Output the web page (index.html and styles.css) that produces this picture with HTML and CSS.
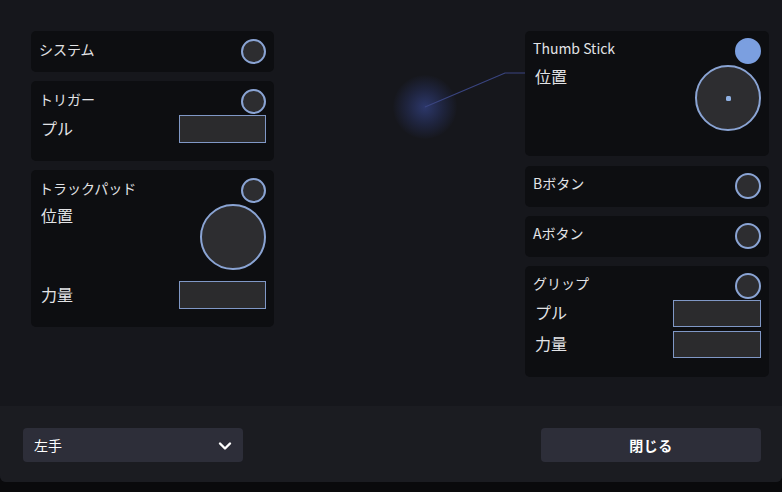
FILE: index.html
```html
<!DOCTYPE html>
<html lang="ja">
<head>
<meta charset="utf-8">
<title>コントローラー</title>
<link rel="stylesheet" href="styles.css">
</head>
<body>
<div class="dialog">
  <main class="canvas">
    <div class="glow"></div>
    <svg class="wire" width="782" height="406" viewBox="0 0 782 406">
      <polyline points="425,107 505,73 525,73" fill="none" stroke="#3a4580" stroke-width="1.2"/>
    </svg>
    <section class="column">
      <div class="card card-single">
        <div class="card-head"><span class="title">システム</span><span class="dot"></span></div>
      </div>
      <div class="card">
        <div class="card-head"><span class="title">トリガー</span><span class="dot"></span></div>
        <div class="row row-tight"><span class="label">プル</span><span class="bar"></span></div>
      </div>
      <div class="card">
        <div class="card-head"><span class="title">トラックパッド</span><span class="dot"></span></div>
        <div class="row row-top row-tight"><span class="label">位置</span><span class="pad"></span></div>
        <div class="row row-gap"><span class="label">力量</span><span class="bar"></span></div>
      </div>
    </section>
    <section class="column column-right">
      <div class="card card-thumb">
        <div class="card-head"><span class="title">Thumb Stick</span><span class="dot dot-on"></span></div>
        <div class="row row-top row-tight"><span class="label">位置</span><span class="pad"><span class="pad-center"></span></span></div>
      </div>
      <div class="card card-single">
        <div class="card-head"><span class="title">Bボタン</span><span class="dot"></span></div>
      </div>
      <div class="card card-single">
        <div class="card-head"><span class="title">Aボタン</span><span class="dot"></span></div>
      </div>
      <div class="card card-grip">
        <div class="card-head"><span class="title">グリップ</span><span class="dot"></span></div>
        <div class="row row-tight"><span class="label">プル</span><span class="bar"></span></div>
        <div class="row row-small"><span class="label">力量</span><span class="bar"></span></div>
      </div>
    </section>
  </main>
  <footer class="footer">
    <button class="select">
      <span>左手</span>
      <svg class="chevron" width="14" height="10" viewBox="0 0 14 10"><polyline points="2,2.5 7,7.5 12,2.5" fill="none" stroke="#ffffff" stroke-width="2.4" stroke-linecap="round" stroke-linejoin="round"/></svg>
    </button>
    <button class="close">閉じる</button>
  </footer>
</div>
</body>
</html>
```
FILE: styles.css
```css
* { box-sizing: border-box; }
html, body {
  margin: 0;
  padding: 0;
  background: #0a0a0c;
  width: 782px;
  height: 492px;
  overflow: hidden;
  font-family: "Noto Sans CJK JP", "Noto Sans", sans-serif;
  color: #dfe0e3;
}
.dialog {
  width: 782px;
  height: 482px;
  display: flex;
  flex-direction: column;
  background: #16171c;
  border-radius: 0 0 6px 6px;
  overflow: hidden;
}
.canvas {
  position: relative;
  height: 406px;
  display: flex;
  justify-content: space-between;
  align-items: flex-start;
  padding: 31px 13px 0 31px;
}
.glow {
  position: absolute;
  left: 393px;
  top: 75px;
  width: 64px;
  height: 64px;
  border-radius: 50%;
  background: radial-gradient(circle, rgba(62,82,170,0.55) 0%, rgba(50,66,140,0.3) 40%, rgba(30,36,70,0) 72%);
}
.wire {
  position: absolute;
  left: 0;
  top: 0;
  pointer-events: none;
}
.column {
  position: relative;
  width: 243px;
  display: flex;
  flex-direction: column;
  gap: 9px;
}
.column-right { width: 244px; }
.column-right .card-thumb { margin-bottom: 1px; }
.card {
  background: #0d0e11;
  border-radius: 5px;
  padding: 8px 8px 18px 8px;
  display: flex;
  flex-direction: column;
}
.card-single { padding-bottom: 8px; }
.column-right .card { padding-top: 7px; }
.column-right .card-single { padding-bottom: 8px; }
.card-thumb { padding-bottom: 25px !important; }
.card-grip { padding-bottom: 19px !important; }
.card-head {
  display: flex;
  justify-content: space-between;
  align-items: flex-start;
  height: 25px;
}
.column-right .card-head { height: 26px; }
.title {
  font-size: 14px;
  line-height: 20px;
  color: #e2e3e6;
}
.dot {
  width: 25px;
  height: 25px;
  border-radius: 50%;
  background: #2d2d30;
  border: 2px solid #8aa4d4;
}
.column-right .dot { width: 26px; height: 26px; }
.dot-on {
  background: #7b9fe0;
  border-color: #7b9fe0;
}
.row {
  display: flex;
  justify-content: space-between;
  align-items: center;
}
.row .label { margin-bottom: 3px; }
.row-top { align-items: flex-start; }
.row-top .label { margin-bottom: 0; }
.row-tight { margin-top: 1px; }
.row-gap { margin-top: 11px; }
.row-small { margin-top: 4px; }
.label {
  font-size: 16px;
  line-height: 22px;
  margin-left: 2px;
  color: #e2e3e6;
}
.bar {
  width: 87px;
  height: 28px;
  background: #2b2b2d;
  border: 1px solid #8098c6;
}
.column-right .bar { width: 88px; height: 27px; }
.pad {
  width: 66px;
  height: 66px;
  border-radius: 50%;
  background: #2d2d30;
  border: 2px solid #8aa4d4;
  display: flex;
  align-items: center;
  justify-content: center;
}
.pad-center {
  width: 5px;
  height: 5px;
  border-radius: 1.5px;
  background: #8fb0e2;
}
.footer {
  height: 76px;
  background: #1b1c21;
  display: flex;
  justify-content: space-between;
  align-items: flex-start;
  padding: 22px 21px 0 23px;
}
.select, .close {
  font-family: "Noto Sans CJK JP", "Noto Sans", sans-serif;
  width: 220px;
  height: 34px;
  border: none;
  border-radius: 4px;
  background: #2d2e39;
  color: #ffffff;
  font-size: 14px;
}
.select {
  display: flex;
  align-items: center;
  justify-content: space-between;
  padding: 0 11px 0 11px;
}
.chevron { margin-top: 1px; }
.close {
  font-weight: bold;
  letter-spacing: 0.5px;
}
```
